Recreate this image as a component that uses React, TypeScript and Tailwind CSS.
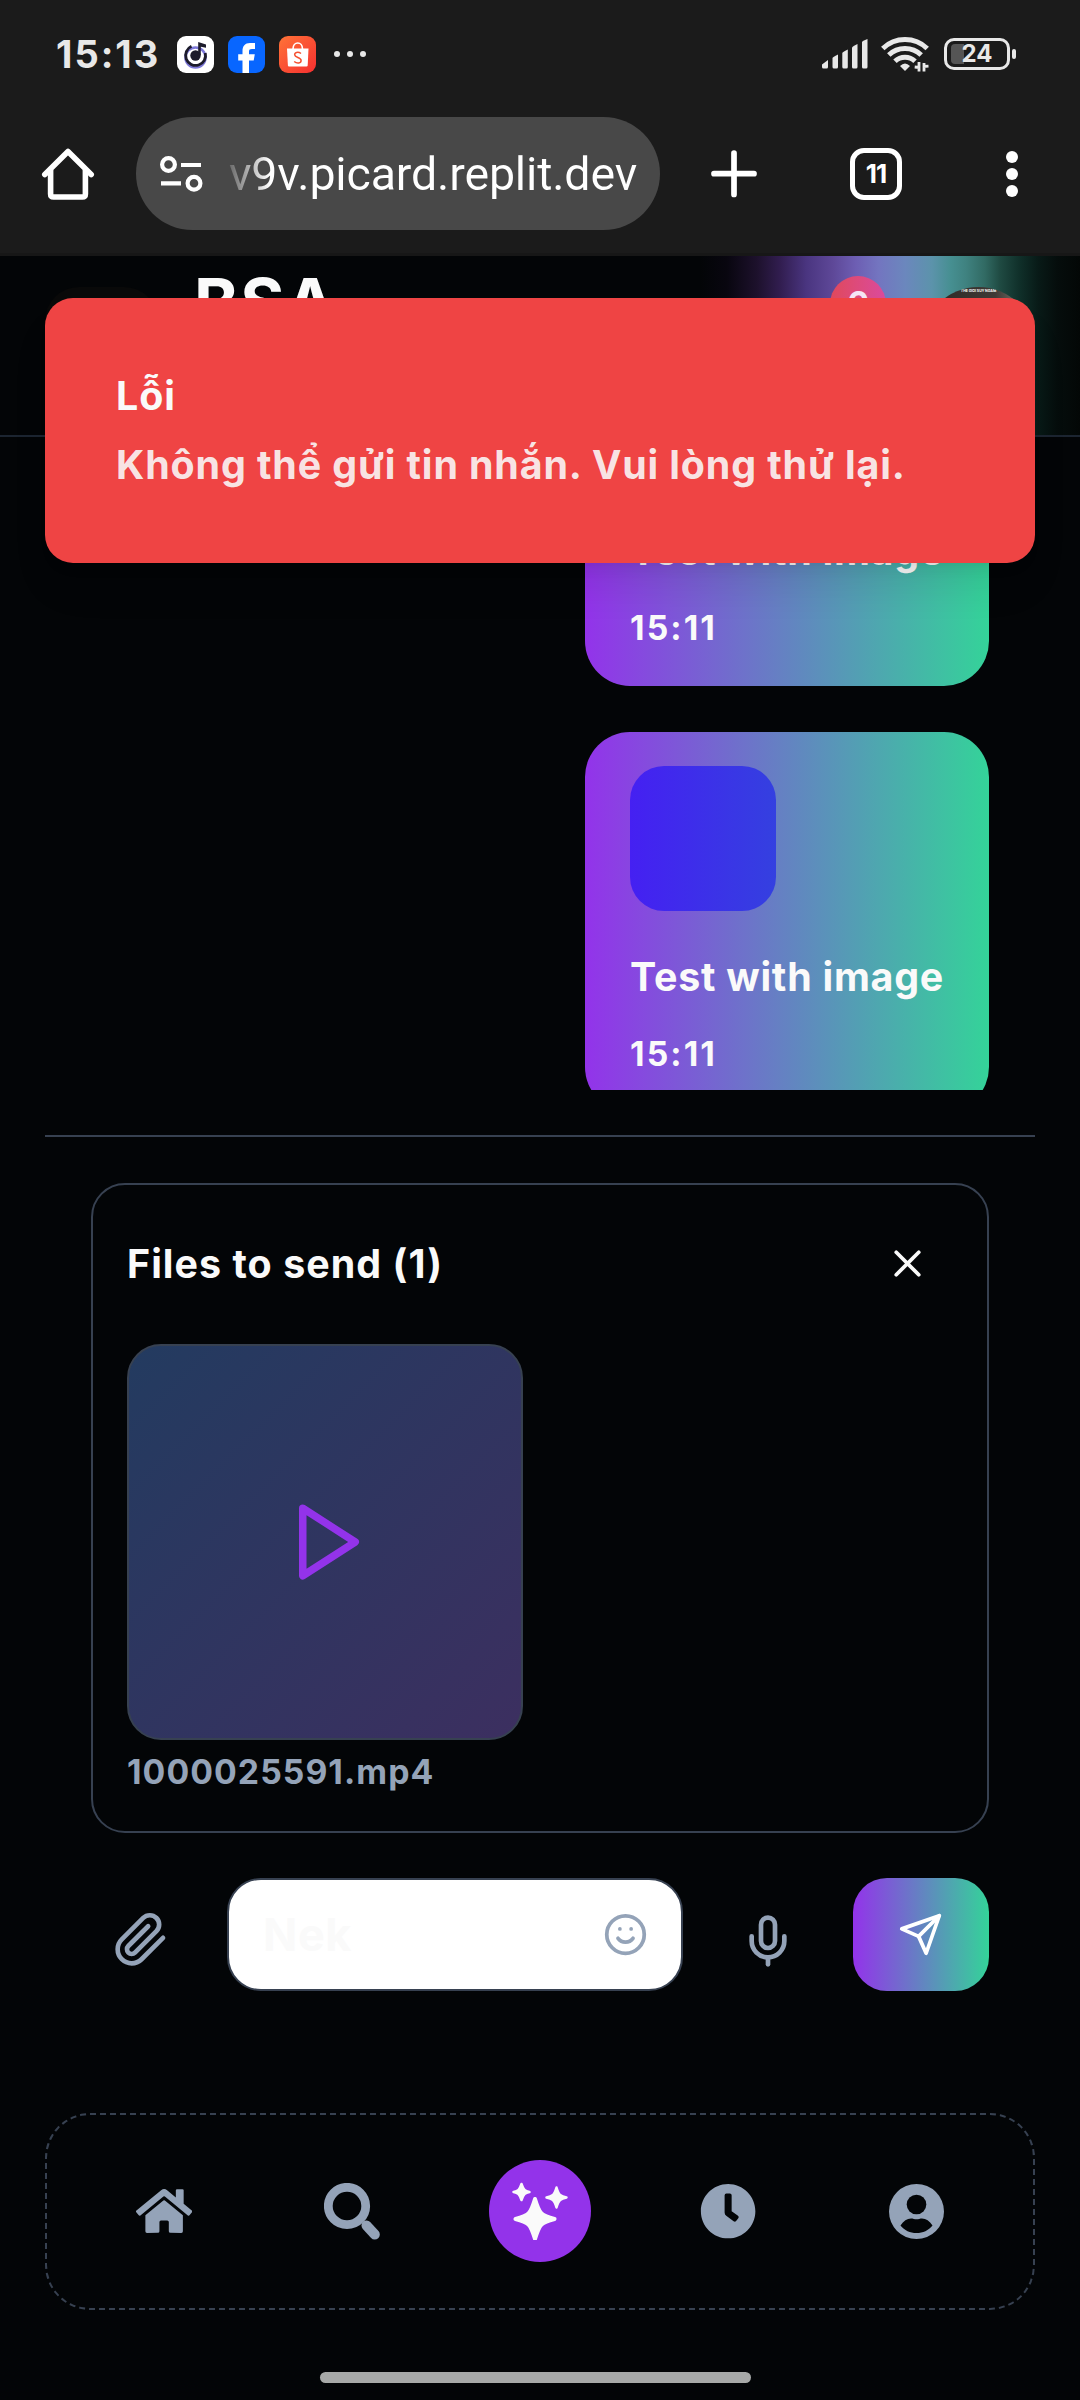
import type { ReactNode } from "react";
import { FaClock, FaHome } from "react-icons/fa";
import { FiPaperclip, FiPlay, FiSend } from "react-icons/fi";
import { Mic, Smile, X } from "lucide-react";

function MusicApp() {
  return (
    <svg viewBox="0 0 37 37" className="size-[37px]">
      <rect width="37" height="37" rx="9" fill="#fff" />
      <circle cx="18.5" cy="21.5" r="10" fill="none" stroke="#7d78d8" strokeWidth="2.6" />
      <path d="M14.5 10.3A10 10 0 1 0 28.3 17" fill="none" stroke="#1c1b2b" strokeWidth="2.8" />
      <circle cx="18.5" cy="19.5" r="5.2" fill="#1c1b2b" />
      <path d="M21.2 19V6l7.8 2.5v3.2l-5.2-1V19z" fill="#1c1b2b" />
    </svg>
  );
}

function FacebookApp() {
  return (
    <svg viewBox="0 0 37 37" className="size-[37px]">
      <rect width="37" height="37" rx="9" fill="#0866ff" />
      <path d="M14.5 37V24.5h-4.3v-6.3h4.3v-3C14.500 10 17 7 22 7h5v6h-3c-2.300 0-3 .8-3 2.600v2.600h5.800l-1.100 6.300H21V37z" fill="#fff" />
    </svg>
  );
}

function ShopApp() {
  return (
    <svg viewBox="0 0 37 37" className="size-[37px]">
      <defs>
        <linearGradient id="shop" x1="0" y1="0" x2="1" y2="1">
          <stop offset="0" stopColor="#ff7337" />
          <stop offset="1" stopColor="#f52f30" />
        </linearGradient>
      </defs>
      <rect width="37" height="37" rx="9" fill="url(#shop)" />
      <path d="M8 12.500h21.500l-.8 17q-.1 1-1.200 1H10q-1 0-1.100-1z" fill="#fff" />
      <path d="M14 13c0-8 9.500-8 9.500 0" fill="none" stroke="#fff" strokeWidth="1.700" />
      <path d="M22 17.500c-3-2.300-6.600-1-6.300 1.400.3 3 6.400 2.300 6.400 5.600 0 2.800-4 3.500-6.900 1" fill="none" stroke="#f5502f" strokeWidth="1.500" />
    </svg>
  );
}

function StatusBar() {
  return (
    <div className="flex h-[108px] items-center pl-[56px] pr-[64px]">
      <span className="w-[105px] whitespace-nowrap text-[38px] font-bold leading-[38px] tracking-[2px] text-[#e8e8e8]">15:13</span>
      <div className="ml-[16px] flex gap-[14px]">
        <MusicApp />
        <FacebookApp />
        <ShopApp />
      </div>
      <div className="ml-[18px] flex gap-[7px]">
        <i className="size-[6px] rounded-full bg-[#e8e8e8]" />
        <i className="size-[6px] rounded-full bg-[#e8e8e8]" />
        <i className="size-[6px] rounded-full bg-[#e8e8e8]" />
      </div>
      <svg viewBox="0 0 46 30" className="ml-auto h-[30px] w-[46px]" fill="#e8e8e8">
        <path d="M0 25.500l6-4.500v7q0 1.500-1.500 1.500h-3Q0 29.500 0 28z" />
        <path d="M10.500 19q0-1 5.500-3.500V28q0 1.500-1.500 1.500h-2.500q-1.500 0-1.500-1.500z" />
        <path d="M20.300 14q0-1 5.500-3.500V28q0 1.500-1.500 1.500h-2.500q-1.500 0-1.500-1.500z" />
        <path d="M30 8.500q0-1 5.500-3.500V28q0 1.500-1.500 1.500h-2.500Q30 29.500 30 28z" />
        <path d="M40 3q0-1 5.500-3V28q0 1.500-1.500 1.500h-2.500Q40 29.500 40 28z" />
      </svg>
      <svg viewBox="0 0 48 36" className="ml-[13px] h-[36px] w-[48px]" fill="none" stroke="#e8e8e8" strokeWidth="5">
        <path d="M1.800 12.500a32 32 0 0 1 44.400 0" />
        <path d="M7.800 19a23.500 23.500 0 0 1 32.400 0" />
        <path d="M14 25.300a14.500 14.500 0 0 1 20 0" />
        <path d="M19 30q5-5 10 0l-5 5z" fill="#e8e8e8" stroke="none" />
        <path d="M38 26v9.500M38.200 31.500l-4.500-.5M43 35.500V27M42.500 30.500l5-.3" strokeWidth="2.800" />
      </svg>
      <div className="relative ml-[15px] flex h-[32px] w-[66px] items-center justify-center rounded-[10px] border-[3px] border-[#e8e8e8]">
        <i className="absolute left-[4px] top-[3px] h-[20px] w-[13px] rounded-l-[4px] bg-[#555]" />
        <span className="relative text-[24px] font-bold leading-[24px] text-[#e8e8e8]">24</span>
      </div>
      <i className="ml-[2px] h-[10px] w-[4px] rounded-[2px] bg-[#e8e8e8]" />
    </div>
  );
}

function BrowserBar() {
  return (
    <div className="flex h-[148px] items-start pl-[42px] pt-[9px]">
      <svg viewBox="0 0 52 52" className="mt-[31px] h-[52px] w-[52px] overflow-visible" fill="none" stroke="#fff" strokeWidth="5.600" strokeLinejoin="round">
        <path d="M2.800 26.500L26 3.500l23.200 23" strokeLinecap="round" />
        <path d="M8.600 22v24q0 3 3 3h28.800q3 0 3-3V22" />
      </svg>
      <div className="ml-[42px] flex h-[113px] w-[524px] items-center rounded-full bg-[#484848] pl-[24px]">
        <svg viewBox="0 0 43 36" className="h-[36px] w-[43px]" fill="none" stroke="#fff" strokeWidth="4.200">
          <circle cx="8.500" cy="8.500" r="6.400" />
          <path d="M21 9h20M1 27.300h20" />
          <circle cx="34" cy="27.300" r="6.400" />
        </svg>
        <span className="ml-[26px] w-[410px] whitespace-nowrap bg-linear-to-r from-[#6a6a6a] via-[#b5b5b5] via-5% to-white to-10% bg-clip-text font-[Roboto,sans-serif] text-[46.500px] leading-[60px] tracking-[-0.150px] text-transparent">v9v.picard.replit.dev</span>
      </div>
      <svg viewBox="0 0 46 48" className="ml-[51px] mt-[33px] h-[48px] w-[46px]" stroke="#fff" strokeWidth="5.700" strokeLinecap="round">
        <path d="M23 3v41.500M3 23.700h40" />
      </svg>
      <div className="ml-[93px] mt-[31px] flex size-[52px] items-center justify-center rounded-[14px] border-[5.500px] border-white">
        <span className="text-[26px] font-bold leading-[26px] tracking-[-1px] text-white">11</span>
      </div>
      <div className="ml-[104px] mt-[34px] flex flex-col gap-[5px]">
        <i className="size-[12px] rounded-full bg-white" />
        <i className="size-[12px] rounded-full bg-white" />
        <i className="size-[12px] rounded-full bg-white" />
      </div>
    </div>
  );
}

function Header() {
  return (
    <header className="relative flex h-[181px] shrink-0 items-start overflow-hidden border-b-2 border-[#1c2531] px-[45px]">
      <div className="absolute inset-y-0 right-0 w-[380px] bg-[linear-gradient(90deg,#030507_0%,#08060f_7%,#1d112c_15%,#311d4f_21%,#4a3580_28%,#5e4898_35%,#6d5eb3_41%,#7375c0_47%,#6b87bd_54%,#5c93ab_61%,#468f91_66%,#3f8280_70%,#316a63_75%,#1f4a42_79%,#10302a_84%,#081a17_89%,#050d0c_94%,#030706_100%)]" />
      <div className="relative mt-[31px] size-[113px] rounded-[34px] bg-[#090909]" />
      <h1 className="relative ml-[36px] mt-[7px] text-[67.500px] font-bold leading-[80px] tracking-[1.700px] text-[#fafafa]">BSA</h1>
      <div className="relative ml-auto mt-[31px] size-[113px] overflow-hidden rounded-full bg-linear-to-r from-[#2c2622] via-[#3f3a36] via-65% to-[#a09488]">
        <p className="mt-[2px] text-center text-[3.500px] font-bold leading-[4px] text-white">THE GIOI SUY NGAM</p>
      </div>
      <span className="absolute left-[830px] top-[20px] flex size-[56px] items-center justify-center rounded-full bg-linear-to-r from-[#e0485a] to-[#db4a9c] text-[33.750px] font-bold text-[#f5e6f5]">6</span>
    </header>
  );
}

function Bubble() {
  return (
    <div className="flex h-[380px] w-[404px] shrink-0 flex-col rounded-[45px] bg-linear-to-r/srgb from-[#9333ea] to-[#34d399] px-[45px] pt-[34px] text-[#fafafa]">
      <div className="h-[145px] w-[146px] shrink-0 rounded-[34px] bg-linear-to-r/srgb from-[#4520f2] to-[#3440e0]" />
      <p className="mt-[38px] whitespace-nowrap text-[39.375px] font-bold leading-[56px] tracking-[0.760px]">Test with image</p>
      <span className="mt-[26px] text-[33.750px] font-bold leading-[45px] tracking-[2.100px]">15:11</span>
    </div>
  );
}

function Composer() {
  return (
    <div className="flex h-[113px] items-end">
      <FiPaperclip className="mb-[23px] ml-[22px] size-[56px] text-[#94a3b8]" />
      <div className="ml-[58px] flex h-[113px] w-[456px] items-center justify-between rounded-[34px] border-2 border-[#374151] bg-white pl-[34px] pr-[33px]">
        <span className="text-[45px] font-bold leading-[56px] tracking-[0.600px] text-[#fafafa]">Nek</span>
        <Smile className="size-[45px] text-[#94a3b8]" />
      </div>
      <Mic className="mb-[22px] ml-[57px] size-[56px] text-[#94a3b8]" />
      <div className="ml-auto flex h-[113px] w-[136px] items-center justify-center rounded-[34px] bg-linear-to-r/srgb from-[#9333ea] to-[#34d399]">
        <FiSend className="mr-[2px] size-[45px] text-white" />
      </div>
    </div>
  );
}

function NavItem({ children }: { children: ReactNode }) {
  return <div className="flex w-[188px] items-center justify-center text-[#94a3b8]">{children}</div>;
}

function BottomNav() {
  return (
    <nav className="mx-[45px] mt-[122px] flex h-[197px] shrink-0 items-center justify-center rounded-[45px] border-2 border-dashed border-[#374151] pb-[1px]">
      <NavItem>
        <FaHome className="h-[50px] w-[56.250px]" />
      </NavItem>
      <NavItem>
        <svg viewBox="0 0 56 57" className="h-[57px] w-[56px]" fill="none" stroke="currentColor">
          <circle cx="23" cy="23" r="18.700" strokeWidth="8.800" />
          <path d="M42.500 42.500l8.300 9" strokeWidth="10" strokeLinecap="round" />
        </svg>
      </NavItem>
      <NavItem>
        <div className="flex size-[102px] items-center justify-center rounded-full bg-[#9333ea]">
          <svg viewBox="0 0 56 58" className="h-[58px] w-[56px]" fill="#fafafa" stroke="#fafafa" strokeLinejoin="round">
            <path d="M23 17q3.500 11.500 6.500 14.500t13 5.500q-10 2.500-13 5.500t-6.500 14.500q-3.500-11.500-6.500-14.500T3.500 37q10-2.500 13-5.500t6.500-14.500z" strokeWidth="4" />
            <path d="M9.500 2q1.500 4.500 3 6t5 2q-3.500.5-5 2t-3 6q-1.500-4.500-3-6t-5-2q3.500-.5 5-2t3-6z" strokeWidth="2.500" />
            <path d="M44.500 5.500q1.800 6 3.700 7.500t6.300 2.500q-4.400 1-6.300 2.500t-3.700 7.500q-1.800-6-3.700-7.500t-6.300-2.500q4.400-1 6.300-2.500t3.700-7.500z" strokeWidth="2.500" />
          </svg>
        </div>
      </NavItem>
      <NavItem>
        <FaClock className="size-[56.250px]" />
      </NavItem>
      <NavItem>
        <svg viewBox="0 0 55 55" className="size-[55px]">
          <circle cx="27.500" cy="27.500" r="27.500" fill="currentColor" />
          <circle cx="27.500" cy="20.500" r="9.800" fill="#030507" />
          <path d="M11.500 41.500c3-4.500 6.500-7 10.500-7 2 0 3.500.8 5.500.8s3.500-.8 5.500-.8c4 0 7.500 2.500 10.500 7-4 5-9.500 7.500-16 7.500s-12-2.500-16-7.500z" fill="#030507" />
        </svg>
      </NavItem>
    </nav>
  );
}

export default function App() {
  return (
    <div className="relative flex h-[2400px] w-[1080px] flex-col overflow-hidden bg-[#030507] font-[Inter,sans-serif]">
      <div className="h-[256px] shrink-0 border-b-[3px] border-[#171717] bg-[#1b1b1b]">
        <StatusBar />
        <BrowserBar />
      </div>
      <Header />
      <section className="h-[653px] shrink-0 overflow-hidden pr-[91px]">
        <div className="-mt-[131px] flex flex-col items-end gap-[46px]">
          <Bubble />
          <Bubble />
        </div>
      </section>
      <section className="mx-[45px] mt-[45px] shrink-0 border-t-2 border-[#374151] px-[46px] pt-[46px]">
        <div className="h-[650px] rounded-[34px] border-2 border-[#374151] px-[34px] pt-[30px]">
          <div className="flex h-[96px] items-center justify-between pr-[23px]">
            <h2 className="pt-[2px] text-[39.375px] font-bold leading-[56px] tracking-[1.050px] text-[#fafafa]">Files to send (1)</h2>
            <X className="size-[45px] text-[#fafafa]" />
          </div>
          <div className="mt-[33px] flex size-[396px] items-center justify-center rounded-[34px] border-2 border-[#374151] bg-linear-to-br/srgb from-[#233b60] to-[#3c2f60]">
            <FiPlay className="ml-[7px] size-[90px] text-[#9333ea]" />
          </div>
          <p className="mt-[9px] text-[33.750px] font-bold leading-[45px] tracking-[1.050px] text-[#94a3b8]">1000025591.mp4</p>
        </div>
        <div className="mt-[45px]">
          <Composer />
        </div>
      </section>
      <BottomNav />
      <div className="ml-[320px] mt-[62px] h-[11px] w-[431px] rounded-full bg-[#a7a9a8]" />
      <div role="alert" className="absolute left-[45px] top-[298px] h-[265px] w-[990px] rounded-[28px] bg-[#ef4444] px-[71px] pt-[70px] text-[39.375px] font-bold leading-[56px] tracking-[0.880px] text-[#fafafa] shadow-[0_28px_42px_-8px_rgba(0,0,0,0.1),0_11px_17px_-11px_rgba(0,0,0,0.1)]">
        <p>Lỗi</p>
        <p className="mt-[13px] whitespace-nowrap text-[#fafafa]/90">Không thể gửi tin nhắn. Vui lòng thử lại.</p>
      </div>
    </div>
  );
}
